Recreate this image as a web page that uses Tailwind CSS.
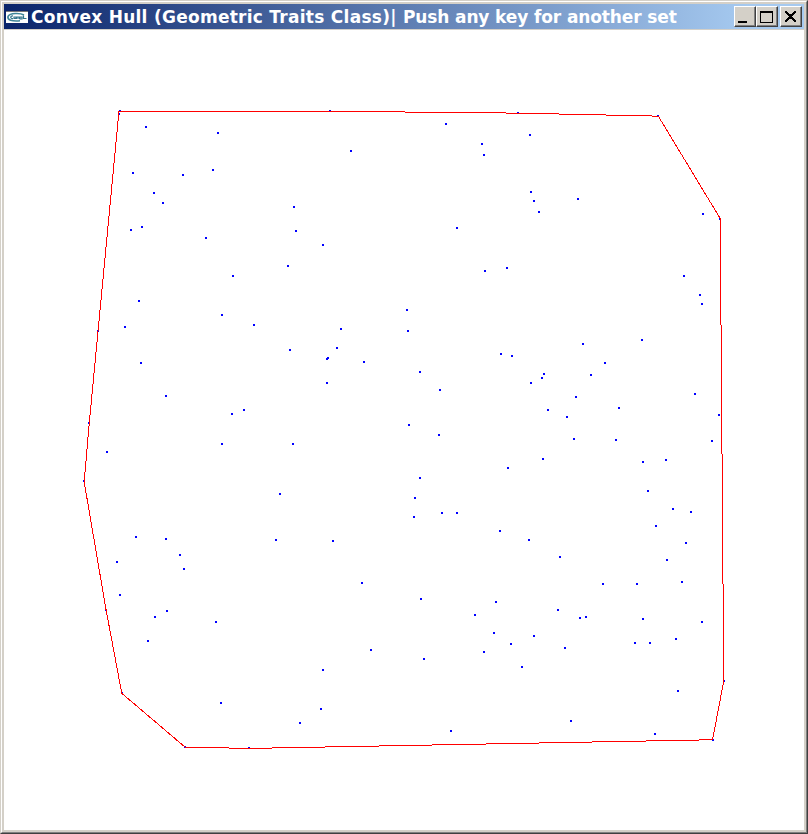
<!DOCTYPE html>
<html lang="en">
<head>
<meta charset="utf-8">
<title>Convex Hull</title>
<script src="https://cdn.jsdelivr.net/npm/@tailwindcss/browser@4"></script>
</head>
<body class="w-[808px] h-[834px] overflow-hidden">
<div class="w-[808px] h-[834px] border border-t-[#d4d0c8] border-l-[#d4d0c8] border-r-[#404040] border-b-[#404040]">
<div class="size-full border border-t-white border-l-white border-r-[#808080] border-b-[#808080] bg-[#d4d0c8] p-[2px] flex flex-col">
  <header class="h-[25px] shrink-0 flex items-center pl-[2px] pr-[2px] bg-linear-to-r/srgb from-[#0a246a] to-[#a6caf0] to-[745px]">
    <svg class="w-[22px] h-3 shrink-0" viewBox="0 0 22 12">
      <rect width="22" height="12" fill="#fff"/>
      <path d="M0 .5H22" stroke="#777" stroke-width="1"/>
      <path d="M18 4C14 1.800 4 1.800 2 5.500C1 9 6 10.500 14 9.800" fill="none" stroke="#3d8598" stroke-width="1.600"/>
      <path d="M7 4.800C4 4.500 4 8 7 7.500M8 6h2v1.500h-2zM11 8V6h2v2M14 6h2V8h-2zM17.500 4.500V7.500h3" fill="none" stroke="#32758c" stroke-width="1.200"/>
    </svg>
    <h1 class="ml-[3px] w-[700px] whitespace-nowrap font-bold text-[17px] leading-6 text-white font-['DejaVu_Sans',sans-serif]"><span class="tracking-[0.27px]">Convex Hull (Geometric Traits Class)| </span><span class="tracking-[-0.12px]">Push any key for another set</span></h1>
    <div class="ml-auto flex shrink-0">
      <button aria-label="Minimize" class="w-[22px] h-[21px] bg-[#d4d0c8] border border-t-white border-l-white border-r-[#404040] border-b-[#404040]"><svg class="block w-5 h-[19px] border-r border-b border-[#808080]" viewBox="0 0 19 18"><path d="M3 14h9v2H3z"/></svg></button>
      <button aria-label="Maximize" class="w-[22px] h-[21px] bg-[#d4d0c8] border border-t-white border-l-white border-r-[#404040] border-b-[#404040]"><svg class="block w-5 h-[19px] border-r border-b border-[#808080]" viewBox="0 0 19 18"><path fill-rule="evenodd" d="M3 4h13v12H3zM4 6v9h11V6z"/></svg></button>
      <button aria-label="Close" class="ml-[2px] w-[22px] h-[21px] bg-[#d4d0c8] border border-t-white border-l-white border-r-[#404040] border-b-[#404040]"><svg class="block w-5 h-[19px] border-r border-b border-[#808080]" viewBox="0 0 19 18"><path shape-rendering="crispEdges" d="M4 4h2v1h1v1h1v1h3V6h1V5h1V4h2v2h-1v1h-1v1h-1v1h-1v1h1v1h1v1h1v1h1v2h-2v-1h-1v-1h-1v-1H8v1H7v1H6v1H4v-2h1v-1h1v-1h1v-1h1V9H7V8H6V7H5V6H4z"/></svg></button>
    </div>
  </header>
  <main class="mt-px flex-1 bg-white">
    <svg class="block w-[800px] h-[800px]" viewBox="4 30 800 800" shape-rendering="crispEdges">
      <path id="points" fill="#00f"/>
      <g fill="none" stroke="#f00" stroke-width="1">
        <path d="M119 111.500H405M405 112.500H506M506 113.500H559M559 114.500H606M606 115.500H652M652 116.500H659"/>
        <path d="M720.500 219V325M721.500 325V454M722.500 454V584M723.500 584V685"/>
        <path d="M185 747.500H229M229 748.500H272M272 747.500H325M325 746.500H379M379 745.500H432M432 744.500H486M486 743.500H539M539 742.500H592M592 741.500H646M646 740.500H699M699 739.500H713"/>
        <path d="M658.500 116.500L720.500 219M723 685L712.500 740M185.500 747.500L122 693.500L121.700 693L106 609.500L84.200 482L89 426L119 111"/>
      </g>
    </svg>
  </main>
</div>
</div>
<script>
// Sample set, one "x,y" pair per point; each point is a 2px square.
const points = `120,111 119,114 330,111 146,127 218,133 133,173 183,175 213,170 154,193 163,203 131,230 142,227 206,238 294,207 296,231 323,245 288,266 233,276 139,301 125,327 98,331 222,315 254,325 290,350 337,348 328,358 327,359
446,124 482,144 484,155 530,135 518,113 351,151 531,192 534,201 539,212 578,199 457,228 485,271 507,268 407,310 408,331 341,329 501,354 512,356 583,344
658,116 703,214 720,219 684,276 700,295 702,304 642,340 605,363 591,375 576,397 567,417 619,408 695,394 719,415
141,363 166,396 89,423 107,452 84,481 232,414 244,410 222,444 293,444 327,383 364,362 280,494 136,537 166,539 180,555 184,569 117,562 120,595 106,610 155,617 167,611 148,641 216,622 276,540 333,541 362,583 323,670 221,703 321,709 300,723 122,693 185,747 249,748
420,372 440,390 531,383 542,378 544,374 548,410 409,425 439,435 543,459 508,468 420,478 415,498 414,517 442,513 457,513 500,531 529,540 560,557 421,599 496,602 475,615 494,633 511,644 534,636 558,610 565,648 371,650 424,659 484,652 522,667 451,731
574,439 616,440 712,441 643,462 666,460 648,491 673,509 691,512 656,526 686,543 667,560 603,584 637,584 682,582 580,618 586,617 643,619 702,622 635,643 650,643 676,639 678,691 724,681 655,734 571,721 713,740`;
document.getElementById('points').setAttribute('d', points.split(/\s+/).map(p => {
  const [x, y] = p.split(',').map(Number);
  return `M${x - 1} ${y - 1}h2v2h-2z`;
}).join(''));
</script>
</body>
</html>
